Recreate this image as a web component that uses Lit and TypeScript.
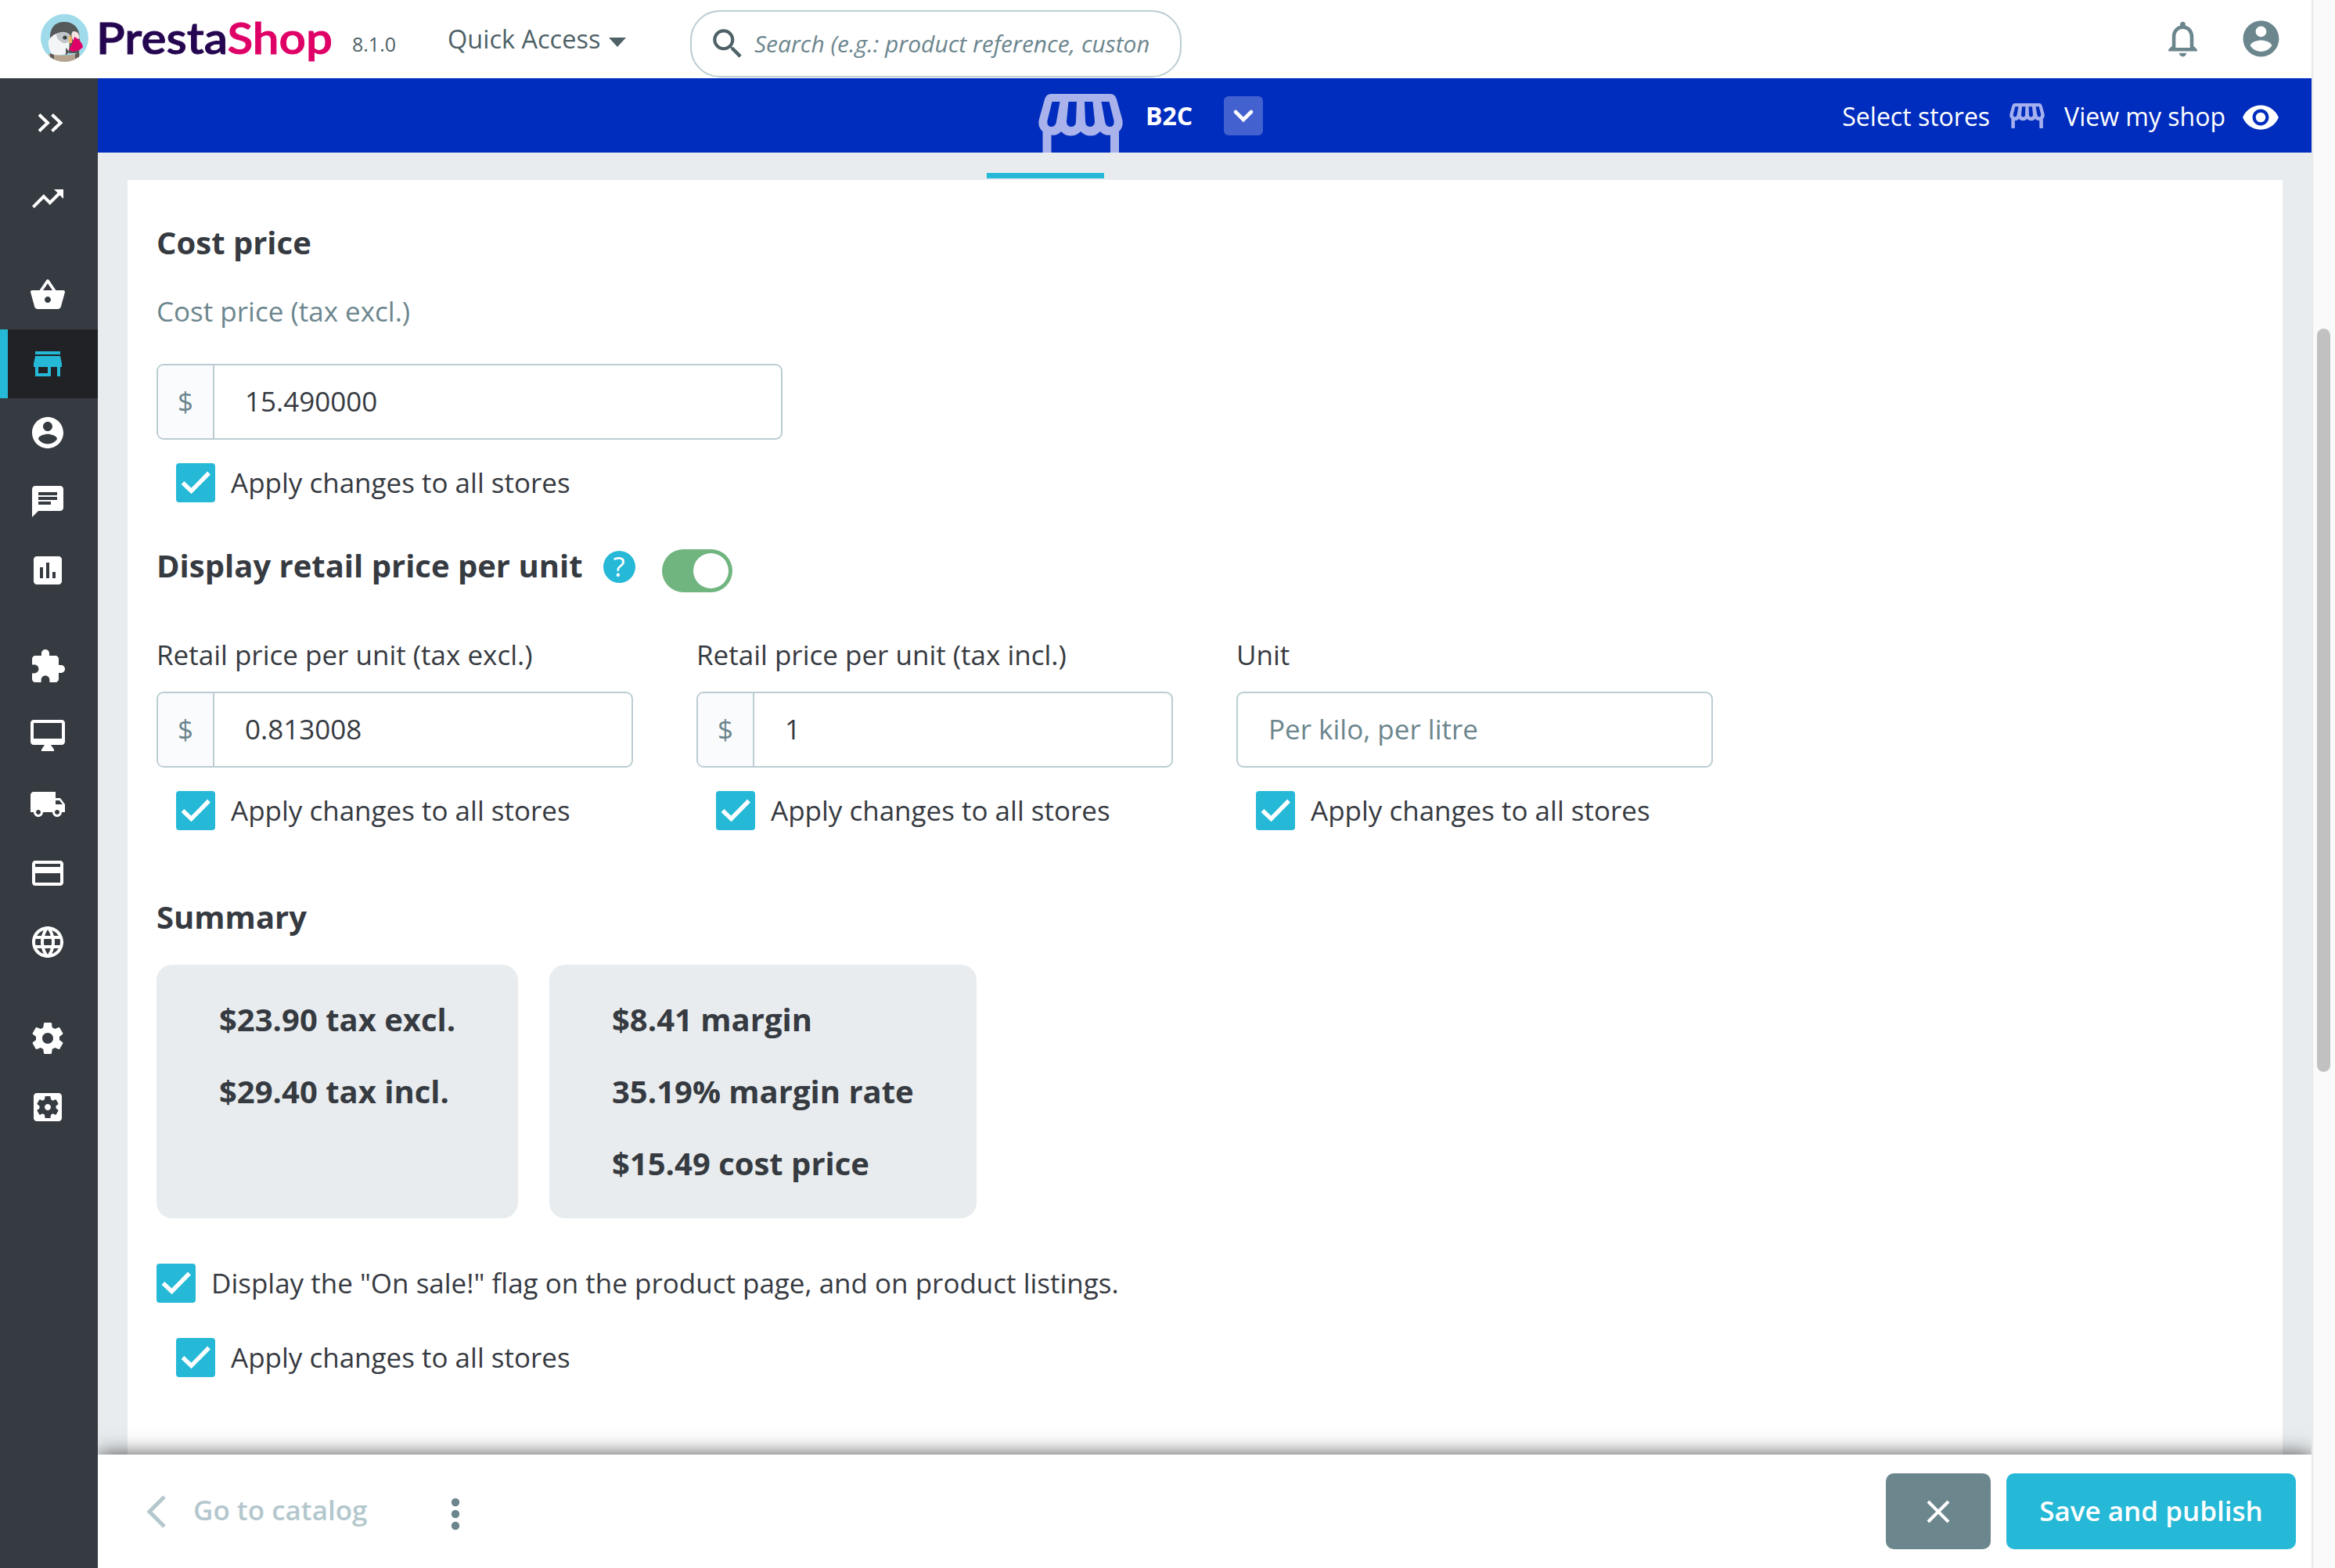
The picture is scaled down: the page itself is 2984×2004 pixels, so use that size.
import { LitElement, html, css, svg } from "lit";
import { customElement, property } from "lit/decorators.js";
import { classMap } from "lit/directives/class-map.js";

/* Glyphs on a 24-unit grid. */
const ICONS: Record<string, string> = {
  trending: "M16 6l2.29 2.29-4.88 4.88-4-4L2 16.59 3.41 18l6-6 4 4 6.3-6.29L22 12V6z",
  basket:
    "M17.21 9l-4.38-6.56c-.19-.28-.51-.42-.83-.42-.32 0-.64.14-.83.43L6.79 9H2c-.55 0-1 .45-1 1 0 .09.01.18.04.27l2.54 9.27c.23.84 1 1.46 1.92 1.46h13c.92 0 1.69-.62 1.93-1.46l2.54-9.27L23 10c0-.55-.45-1-1-1h-4.79zM9 9l3-4.4L15 9H9zm3 8c-1.1 0-2-.9-2-2s.9-2 2-2 2 .9 2 2-.9 2-2 2z",
  store: "M20 4H4v2h16V4zm1 10v-2l-1-5H4l-1 5v2h1v6h10v-6h4v6h2v-6h1zm-9 4H6v-4h6v4z",
  person:
    "M12 2C6.48 2 2 6.48 2 12s4.48 10 10 10 10-4.48 10-10S17.52 2 12 2zm0 3c1.66 0 3 1.34 3 3s-1.34 3-3 3-3-1.34-3-3 1.34-3 3-3zm0 14.2c-2.5 0-4.71-1.28-6-3.22.03-1.99 4-3.08 6-3.08 1.99 0 5.97 1.09 6 3.08-1.29 1.94-3.5 3.22-6 3.22z",
  chat: "M20 2H4c-1.1 0-1.99.9-1.99 2L2 22l4-4h14c1.1 0 2-.9 2-2V4c0-1.1-.9-2-2-2zM6 9h12v2H6V9zm8 5H6v-2h8v2zm4-6H6V6h12v2z",
  chart:
    "M19 3H5c-1.1 0-2 .9-2 2v14c0 1.1.9 2 2 2h14c1.1 0 2-.9 2-2V5c0-1.1-.9-2-2-2zM9 17H7v-7h2v7zm4 0h-2V7h2v10zm4 0h-2v-4h2v4z",
  extension:
    "M20.5 11H19V7c0-1.1-.9-2-2-2h-4V3.5C13 2.12 11.88 1 10.5 1S8 2.12 8 3.5V5H4c-1.1 0-1.99.9-1.99 2v3.8H3.5c1.49 0 2.7 1.21 2.7 2.7s-1.21 2.7-2.7 2.7H2V20c0 1.1.9 2 2 2h3.8v-1.5c0-1.49 1.21-2.7 2.7-2.7 1.49 0 2.7 1.21 2.7 2.7V22H17c1.1 0 2-.9 2-2v-4h1.5c1.38 0 2.5-1.12 2.5-2.5S21.88 11 20.5 11z",
  desktop:
    "M21 2H3c-1.1 0-2 .9-2 2v12c0 1.1.9 2 2 2h7l-2 3v1h8v-1l-2-3h7c1.1 0 2-.9 2-2V4c0-1.1-.9-2-2-2zm0 12H3V4h18v10z",
  truck:
    "M20 8h-3V4H3c-1.1 0-2 .9-2 2v11h2c0 1.66 1.34 3 3 3s3-1.34 3-3h6c0 1.66 1.34 3 3 3s3-1.34 3-3h2v-5l-3-4zM6 18.5c-.83 0-1.5-.67-1.5-1.5s.67-1.5 1.5-1.5 1.5.67 1.5 1.5-.67 1.5-1.5 1.5zm13.5-9l1.96 2.5H17V9.5h2.5zm-1.5 9c-.83 0-1.5-.67-1.5-1.5s.67-1.5 1.5-1.5 1.5.67 1.5 1.5-.67 1.5-1.5 1.5z",
  card: "M20 4H4c-1.11 0-1.99.89-1.99 2L2 18c0 1.11.89 2 2 2h16c1.11 0 2-.89 2-2V6c0-1.11-.89-2-2-2zm0 14H4v-6h16v6zm0-10H4V6h16v2z",
  globe:
    "M11.99 2C6.47 2 2 6.48 2 12s4.47 10 9.99 10C17.52 22 22 17.52 22 12S17.52 2 11.99 2zm6.93 6h-2.95c-.32-1.25-.78-2.45-1.38-3.56 1.84.63 3.37 1.91 4.33 3.56zM12 4.04c.83 1.2 1.48 2.53 1.91 3.96h-3.82c.43-1.43 1.08-2.76 1.91-3.96zM4.26 14C4.1 13.36 4 12.69 4 12s.1-1.36.26-2h3.38c-.08.66-.14 1.32-.14 2 0 .68.06 1.34.14 2H4.26zm.82 2h2.95c.32 1.25.78 2.45 1.38 3.56-1.84-.63-3.37-1.9-4.33-3.56zm2.95-8H5.08c.96-1.66 2.49-2.93 4.33-3.56C8.81 5.55 8.35 6.75 8.03 8zM12 19.96c-.83-1.2-1.48-2.53-1.91-3.96h3.82c-.43 1.43-1.08 2.76-1.91 3.96zM14.34 14H9.66c-.09-.66-.16-1.32-.16-2 0-.68.07-1.35.16-2h4.68c.09.65.16 1.32.16 2 0 .68-.07 1.34-.16 2zm.25 5.56c.6-1.11 1.06-2.31 1.38-3.56h2.95c-.96 1.65-2.49 2.93-4.33 3.56zM16.36 14c.08-.66.14-1.32.14-2 0-.68-.06-1.34-.14-2h3.38c.16.64.26 1.31.26 2s-.1 1.36-.26 2h-3.38z",
  gear: "M19.43 12.98c.04-.32.07-.64.07-.98s-.03-.66-.07-.98l2.11-1.65c.19-.15.24-.42.12-.64l-2-3.46c-.12-.22-.39-.3-.61-.22l-2.49 1c-.52-.4-1.08-.73-1.69-.98l-.38-2.65C14.46 2.18 14.25 2 14 2h-4c-.25 0-.46.18-.49.42l-.38 2.65c-.61.25-1.17.59-1.69.98l-2.49-1c-.23-.09-.49 0-.61.22l-2 3.46c-.13.22-.07.49.12.64l2.11 1.65c-.04.32-.07.65-.07.98s.03.66.07.98l-2.11 1.65c-.19.15-.24.42-.12.64l2 3.46c.12.22.39.3.61.22l2.49-1c.52.4 1.08.73 1.69.98l.38 2.65c.03.24.24.42.49.42h4c.25 0 .46-.18.49-.42l.38-2.65c.61-.25 1.17-.59 1.69-.98l2.49 1c.23.09.49 0 .61-.22l2-3.46c.12-.22.07-.49-.12-.64l-2.11-1.65zM12 15.5c-1.93 0-3.5-1.57-3.5-3.5s1.57-3.5 3.5-3.5 3.5 1.57 3.5 3.5-1.57 3.5-3.5 3.5z",
  settingsApp:
    "M12 10c-1.1 0-2 .9-2 2s.9 2 2 2 2-.9 2-2-.9-2-2-2zm7-7H5c-1.11 0-2 .9-2 2v14c0 1.1.89 2 2 2h14c1.11 0 2-.9 2-2V5c0-1.1-.89-2-2-2zm-1.750 9c0 .23-.02.46-.05.68l1.480 1.160c.13.11.17.3.08.45l-1.400 2.420c-.09.15-.27.21-.43.15l-1.740-.7c-.36.28-.76.51-1.180.69l-.26 1.850c-.03.17-.18.3-.35.3h-2.800c-.17 0-.32-.13-.35-.29l-.26-1.850c-.43-.18-.82-.41-1.180-.69l-1.740.7c-.16.06-.34 0-.43-.15l-1.400-2.420c-.09-.15-.05-.34.08-.45l1.480-1.160c-.03-.23-.05-.46-.05-.69 0-.23.02-.46.05-.68l-1.480-1.160c-.13-.11-.17-.3-.08-.45l1.400-2.420c.09-.15.27-.21.43-.15l1.740.7c.36-.28.76-.51 1.180-.69l.26-1.850c.03-.17.18-.3.35-.3h2.800c.17 0 .32.13.35.29l.26 1.850c.43.18.82.41 1.180.69l1.740-.7c.16-.06.34 0 .43.15l1.400 2.420c.09.15.05.34-.08.45l-1.480 1.160c.03.23.05.46.05.69z",
  search:
    "M15.5 14h-.79l-.28-.27C15.41 12.59 16 11.11 16 9.5 16 5.91 13.09 3 9.5 3S3 5.91 3 9.5 5.91 16 9.5 16c1.61 0 3.09-.59 4.23-1.57l.27.28v.79l5 4.99L20.49 19l-4.99-5zm-6 0C7.01 14 5 11.99 5 9.5S7.01 5 9.5 5 14 7.01 14 9.5 11.99 14 9.5 14z",
  bell: "M12 22c1.1 0 2-.9 2-2h-4c0 1.1.9 2 2 2zm6-6v-5c0-3.07-1.63-5.64-4.5-6.32V4c0-.83-.67-1.5-1.5-1.5s-1.5.67-1.5 1.5v.68C7.64 5.36 6 7.92 6 11v5l-2 2v1h16v-1l-2-2zm-2 1H8v-6c0-2.48 1.51-4.5 4-4.5s4 2.02 4 4.5v6z",
  eye: "M12 4.5C7 4.5 2.73 7.61 1 12c1.73 4.39 6 7.5 11 7.5s9.27-3.11 11-7.5c-1.73-4.39-6-7.5-11-7.5zM12 17c-2.76 0-5-2.24-5-5s2.24-5 5-5 5 2.24 5 5-2.24 5-5 5zm0-8c-1.66 0-3 1.34-3 3s1.34 3 3 3 3-1.34 3-3-1.34-3-3-3z",
};

@customElement("ps-icon")
class PsIcon extends LitElement {
  @property() name = "";
  static styles = css`
    :host { display: block; flex: none; width: 48px; height: 48px; }
    svg { display: block; width: 100%; height: 100%; fill: currentColor; }
  `;
  render() {
    return html`<svg viewBox="0 0 24 24"><path d=${ICONS[this.name] ?? ""}></path></svg>`;
  }
}

/* Market stall with a scalloped awning. */
@customElement("ps-stall")
class PsStall extends LitElement {
  static styles = css`
    :host { display: block; flex: none; }
    svg { display: block; width: 100%; height: 100%; fill: currentColor; }
  `;
  render() {
    return html`<svg viewBox="0 0 108 77">
      <path
        fill-rule="evenodd"
        d="M16 0H92Q98 0 100 7L107 32Q109.500 42 103 48V74.500Q103 77 100.500 77H94.500Q92 77 92 74.500V52.500Q84 54 79 48Q74 53.500 67 53.500Q59 53.500 54 48Q49 53.500 41 53.500Q34 53.500 29 48Q24 54 16.500 52.500V74.500Q16.500 77 14 77H8Q5.500 77 5.500 74.500V48Q-1.500 42 1 32L8 7Q10 0 16 0ZM17.500 10L11.500 34Q10.500 42 17 42Q22 42 23 35L27.500 10ZM38.500 10L36 35Q36 42 42 42Q48 42 48 35L49 10ZM59 10L60 35Q60 42 66 42Q72 42 72 35L69.500 10ZM80.500 10L85 35Q86 42 91 42Q97.500 42 96.500 34L90.500 10Z"
      ></path>
    </svg>`;
  }
}

@customElement("ps-check")
class PsCheck extends LitElement {
  @property() label = "";
  static styles = css`
    :host { display: flex; align-items: center; gap: 20px; height: 50px; }
    .box { flex: none; width: 50px; height: 50px; border-radius: 4px; background: #25b9d7; }
    svg { display: block; width: 50px; height: 50px; }
    .text { font-size: 35px; line-height: 50px; white-space: nowrap; color: #363a41; }
  `;
  render() {
    return html`
      <div class="box">
        <svg viewBox="0 0 50 50">
          <path d="M8.500 25L19.500 35.500L42 12.500" fill="none" stroke="#fff" stroke-width="5.400"></path>
        </svg>
      </div>
      <span class="text">${this.label}</span>
    `;
  }
}

@customElement("ps-input")
class PsInput extends LitElement {
  @property() prefix = "";
  @property() value = "";
  @property() placeholder = "";
  static styles = css`
    :host {
      display: flex; box-sizing: border-box; height: 97px; overflow: hidden;
      border: 2px solid #bbcdd2; border-radius: 9px; background: #fff;
      font-size: 35px; line-height: 91px; color: #363a41;
    }
    .addon {
      box-sizing: border-box; width: 72px; flex: none; text-align: center;
      background: #fafbfc; border-right: 2px solid #bbcdd2; color: #6c868e; font-size: 35px;
    }
    .value { padding-left: 39px; white-space: nowrap; }
    .hint { color: #6c868e; }
  `;
  render() {
    return html`
      ${this.prefix ? html`<div class="addon">${this.prefix}</div>` : null}
      <div class=${classMap({ value: true, hint: !this.value })}>${this.value || this.placeholder}</div>
    `;
  }
}

const NAV: { icon: string; active?: boolean }[][] = [
  [{ icon: "trending" }],
  [{ icon: "basket" }, { icon: "store", active: true }, { icon: "person" }, { icon: "chat" }, { icon: "chart" }],
  [{ icon: "extension" }, { icon: "desktop" }, { icon: "truck" }, { icon: "card" }, { icon: "globe" }],
  [{ icon: "gear" }, { icon: "settingsApp" }],
];

const UNIT_FIELDS = [
  { label: "Retail price per unit (tax excl.)", prefix: "$", value: "0.813008", placeholder: "" },
  { label: "Retail price per unit (tax incl.)", prefix: "$", value: "1", placeholder: "" },
  { label: "Unit", prefix: "", value: "", placeholder: "Per kilo, per litre" },
];

const SUMMARY = [
  ["$23.90 tax excl.", "$29.40 tax incl."],
  ["$8.41 margin", "35.19% margin rate", "$15.49 cost price"],
];

const APPLY = "Apply changes to all stores";

const puffin = svg`
  <defs><clipPath id="disc"><circle cx="30.500" cy="30.500" r="30.500"></circle></clipPath></defs>
  <g clip-path="url(#disc)">
    <rect width="61" height="61" fill="#9fdbea"></rect>
    <path d="M12 32C11 18 18 10 30 10C42 10 49 17 50 30L49 50H14Z" fill="#55595a"></path>
    <path d="M10 34C14 27 20 23 32 24L37 32L36 50L16 54C11 47 9 40 10 34Z" fill="#f4f5f6"></path>
    <path d="M20 26C25 21 34 22 38 27C38 35 34 38 29 37C24 35 20 31 20 26Z" fill="#bfc6ca"></path>
    <path d="M41 22Q49 21 50 31L42 34Q37 28 41 22Z" fill="#f3e4e2"></path>
    <path d="M36 27Q41 28 40 37L36 37Z" fill="#f5b765"></path>
    <circle cx="31" cy="30" r="2.600" fill="#3b3f41"></circle>
    <path d="M43 29Q52 33 54 42Q51 46 46 47Q40 50 36 45Q41 38 43 29Z" fill="#df0067"></path>
    <path d="M32 43L37 48L32 53Z" fill="#55595a"></path>
    <path d="M10 51Q30 55 50 50V61H10Z" fill="#b6a48f"></path>
    <path d="M12 50L17 52V59L12 56ZM49 49L44 51V57L49 55Z" fill="#5d5a58"></path>
  </g>`;

@customElement("app-root")
class AppRoot extends LitElement {
  static styles = css`
    :host {
      display: flex; width: 2984px; height: 2004px; overflow: hidden; background: #fff;
      font-family: "Open Sans", "Noto Sans", sans-serif; color: #363a41;
    }
    * { box-sizing: border-box; }
    .window { width: 2954px; height: 2004px; display: flex; flex-direction: column; }
    .track { width: 30px; background: #fafafa; border-left: 2px solid #e8e8e8; padding: 420px 6px 0 5px; }
    .thumb { height: 950px; border-radius: 9px; background: #c1c1c1; }

    .header { height: 100px; flex: none; display: flex; align-items: flex-start; padding-left: 52px; background: #fff; }
    .puffin { width: 61px; height: 61px; margin-top: 18px; flex: none; display: block; }
    .brand { width: 323px; height: 100px; margin-left: 10px; flex: none; display: block; overflow: visible; }
    .brand text { font: 600 55px Lato, "Open Sans", sans-serif; stroke-width: 0.900px; }
    .presta { fill: #250650; stroke: #250650; }
    .shopname { fill: #df0067; stroke: #df0067; }
    .version { width: 122px; margin: 36px 0 0 4px; font-size: 25px; line-height: 40px; color: #4e6167; }
    .quick { display: flex; gap: 11px; width: 310px; padding-top: 25px; font-size: 32.500px; line-height: 50px; color: #4e6167; white-space: nowrap; }
    .caret { width: 22px; height: 12px; margin-top: 23px; display: block; }
    .search {
      width: 628px; height: 86px; margin-top: 13px; border: 2px solid #bbcdd2; border-radius: 38px;
      display: flex; padding-left: 21px; color: #4e6167;
    }
    .search ps-icon { width: 50px; height: 50px; margin-top: 16px; }
    .query { width: 504px; margin: 16px 0 0 9px; overflow: hidden; white-space: nowrap; font-size: 30px; line-height: 50px; font-style: italic; color: #6c868e; }
    .tools { margin-left: auto; display: flex; gap: 45px; padding: 22px 37px 0 0; color: #6c868e; }
    .tools ps-icon { width: 55px; height: 55px; }

    .below { flex: 1; display: flex; min-height: 0; }
    .nav { width: 125px; flex: none; background: #363a41; color: #fff; }
    .expand { height: 110px; padding: 45px 0 0 48px; }
    .expand svg { display: block; width: 33px; height: 24px; }
    .group { margin-bottom: 35px; }
    .item { height: 88px; padding: 20px 0 0 37px; }
    .item.active { background: #202226; color: #25b9d7; border-left: 10px solid #25b9d7; padding-left: 27px; }

    .main { flex: 1; display: flex; flex-direction: column; background: #e8ecee; min-width: 0; }
    .shopbar { height: 95px; flex: none; overflow: hidden; display: flex; background: #002dbe; color: #fff; font-size: 32px; line-height: 50px; white-space: nowrap; }
    .bigstall { width: 108px; height: 77px; margin: 20px 0 0 1202px; color: #a9b2ea; }
    .shop { width: 100px; margin: 23px 0 0 29px; font-weight: 700; }
    .drop { width: 50px; height: 50px; margin-top: 23px; border-radius: 6px; background: #4461d0; }
    .drop svg { display: block; width: 50px; height: 50px; }
    .links { margin-left: auto; padding: 24px 40px 0 0; display: flex; }
    .links ps-stall { width: 45px; height: 32px; margin: 8px 25px 0; color: #a4afee; }
    .links ps-icon { width: 50px; height: 50px; margin: 1px 0 0 20px; }

    .content { flex: 1; min-height: 0; overflow: hidden; padding: 26px 37px 0 38px; }
    .tabmark { width: 150px; height: 7px; margin: 0 0 2px 1098px; background: #25b9d7; }
    .panel { height: 1700px; background: #fff; padding: 55px 0 0 37px; }
    h3 { margin: 0; font-size: 40px; line-height: 50px; font-weight: 700; white-space: nowrap; }
    .label { font-size: 35px; line-height: 50px; white-space: nowrap; }
    .muted { color: #6c868e; margin-top: 38px; }
    .cost { width: 800px; margin-top: 42px; }
    .apply { margin: 30px 0 0 25px; }
    .switchrow { display: flex; margin-top: 56px; height: 60px; }
    .help { width: 41px; height: 41px; margin: 6px 0 0 26px; border-radius: 50%; background: #25b9d7; color: #fff; font-size: 35px; line-height: 40px; text-align: center; }
    .toggle { width: 90px; height: 55px; margin: 4px 0 0 34px; border-radius: 28px; background: #70b580; padding: 5px; display: flex; justify-content: flex-end; }
    .knob { width: 45px; height: 45px; border-radius: 50%; background: #fff; }
    .fields { display: grid; grid-template-columns: repeat(3, 609px); gap: 81px; margin-top: 54px; }
    .fields ps-input { margin-top: 22px; }
    .fields .apply { margin-top: 30px; }
    .summary { margin-top: 86px; }
    .cards { display: flex; gap: 40px; margin-top: 36px; }
    .card { height: 324px; border-radius: 20px; background: #e8ecee; padding: 24px 80px; font-size: 40px; line-height: 92px; font-weight: 700; white-space: nowrap; }
    .card.narrow { width: 462px; }
    .card.wide { width: 546px; }
    .sale { margin-top: 58px; }
    .saleapply { margin: 45px 0 0 25px; }

    .footer { position: relative; height: 145px; flex: none; display: flex; background: #fff; box-shadow: 0 0 25px rgba(0, 0, 0, 0.7); clip-path: inset(-60px 0 0 0); padding: 24px 20px 0 60px; font-size: 35px; font-weight: 600; white-space: nowrap; }
    .back { display: block; width: 30px; height: 44px; margin-top: 27px; }
    .catalog { width: 329px; margin: 22px 0 0 32px; line-height: 50px; color: #b3c7cd; }
    .dots { display: block; width: 12px; height: 44px; margin-top: 30px; }
    .actions { margin-left: auto; display: flex; gap: 20px; }
    .btn { height: 97px; border-radius: 10px; color: #fff; line-height: 95px; text-align: center; }
    .cancel { width: 134px; background: #6c868e; display: flex; align-items: center; justify-content: center; }
    .cancel svg { width: 30px; height: 30px; display: block; }
    .save { width: 370px; background: #25b9d7; }
  `;

  private renderHeader() {
    return html`
      <div class="header">
        <svg class="puffin" viewBox="0 0 61 61">${puffin}</svg>
        <svg class="brand" viewBox="0 0 323 100">
          <text class="presta" x="0" y="68.500" textLength="302" lengthAdjust="spacingAndGlyphs">Presta<tspan class="shopname">Shop</tspan></text>
        </svg>
        <div class="version">8.1.0</div>
        <div class="quick">
          <span>Quick Access</span>
          <svg class="caret" viewBox="0 0 22 12"><path d="M0 0H22L11 12Z" fill="#4e6167"></path></svg>
        </div>
        <div class="search">
          <ps-icon name="search"></ps-icon>
          <div class="query">Search (e.g.: product reference, custom</div>
        </div>
        <div class="tools"><ps-icon name="bell"></ps-icon><ps-icon name="person"></ps-icon></div>
      </div>
    `;
  }

  private renderNav() {
    return html`
      <div class="nav">
        <div class="expand">
          <svg viewBox="0 0 33 24" fill="none" stroke="#fff" stroke-width="4">
            <path d="M2 1.500L13 12L2 22.500M18.500 1.500L29.500 12L18.500 22.500"></path>
          </svg>
        </div>
        ${NAV.map(
          (group) => html`<div class="group">
            ${group.map(
              (i) => html`<div class=${classMap({ item: true, active: !!i.active })}><ps-icon name=${i.icon}></ps-icon></div>`
            )}
          </div>`
        )}
      </div>
    `;
  }

  private renderShopBar() {
    return html`
      <div class="shopbar">
        <ps-stall class="bigstall"></ps-stall>
        <div class="shop">B2C</div>
        <div class="drop">
          <svg viewBox="0 0 50 50">
            <path d="M15 20L25 30L35 20" fill="none" stroke="#fff" stroke-width="4.600" stroke-linecap="round"></path>
          </svg>
        </div>
        <div class="links">
          <span>Select stores</span>
          <ps-stall></ps-stall>
          <span>View my shop</span>
          <ps-icon name="eye"></ps-icon>
        </div>
      </div>
    `;
  }

  private renderPanel() {
    return html`
      <div class="panel">
        <h3>Cost price</h3>
        <div class="label muted">Cost price (tax excl.)</div>
        <ps-input class="cost" prefix="$" value="15.490000"></ps-input>
        <ps-check class="apply" label=${APPLY}></ps-check>
        <div class="switchrow">
          <h3>Display retail price per unit</h3>
          <div class="help">?</div>
          <div class="toggle"><div class="knob"></div></div>
        </div>
        <div class="fields">
          ${UNIT_FIELDS.map(
            (f) => html`<div>
              <div class="label">${f.label}</div>
              <ps-input prefix=${f.prefix} value=${f.value} placeholder=${f.placeholder}></ps-input>
              <ps-check class="apply" label=${APPLY}></ps-check>
            </div>`
          )}
        </div>
        <h3 class="summary">Summary</h3>
        <div class="cards">
          ${SUMMARY.map(
            (lines, i) => html`<div class=${classMap({ card: true, narrow: i === 0, wide: i === 1 })}>
              ${lines.map((l) => html`<div>${l}</div>`)}
            </div>`
          )}
        </div>
        <ps-check class="sale" label='Display the "On sale!" flag on the product page, and on product listings.'></ps-check>
        <ps-check class="saleapply" label=${APPLY}></ps-check>
      </div>
    `;
  }

  private renderFooter() {
    return html`
      <div class="footer">
        <svg class="back" viewBox="0 0 30 44"><path d="M25 3L6 22L25 41" fill="none" stroke="#b3c7cd" stroke-width="5"></path></svg>
        <div class="catalog">Go to catalog</div>
        <svg class="dots" viewBox="0 0 12 44" fill="#6c868e">
          <circle cx="6" cy="7" r="5.200"></circle><circle cx="6" cy="22" r="5.200"></circle><circle cx="6" cy="37" r="5.200"></circle>
        </svg>
        <div class="actions">
          <div class="btn cancel">
            <svg viewBox="0 0 30 30"><path d="M2 2L28 28M28 2L2 28" stroke="#fff" stroke-width="4"></path></svg>
          </div>
          <div class="btn save">Save and publish</div>
        </div>
      </div>
    `;
  }

  render() {
    return html`
      <div class="window">
        ${this.renderHeader()}
        <div class="below">
          ${this.renderNav()}
          <div class="main">
            ${this.renderShopBar()}
            <div class="content">
              <div class="tabmark"></div>
              ${this.renderPanel()}
            </div>
            ${this.renderFooter()}
          </div>
        </div>
      </div>
      <div class="track"><div class="thumb"></div></div>
    `;
  }
}
